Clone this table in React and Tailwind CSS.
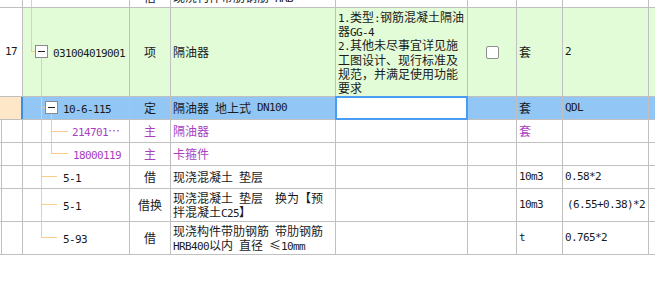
import React from 'react';

const LINE = 'border-[#c0c0c0]';
const CJK = "font-['Noto_Sans_CJK_SC',sans-serif]";

// SimSun-style mix: latin runs are half-width mono, CJK full-width
function Txt({ s }) {
  return s.split(/([\x20-\x7e]+)/).map((p, i) =>
    /^[\x20-\x7e]+$/.test(p) ? (
      <span
        key={i}
        className="font-['DejaVu_Sans_Mono',monospace] text-[11px] leading-[10px] tracking-[-0.62px]"
      >
        {p}
      </span>
    ) : (
      <React.Fragment key={i}>{p}</React.Fragment>
    )
  );
}

const V = ({ left, top = 0, h }) => (
  <span
    className="absolute w-px bg-[#fbcb8c]"
    style={{ left, top, height: h ?? `calc(100% - ${top}px)` }}
  />
);
const H = ({ left, top, w }) => (
  <span className="absolute h-px bg-[#fbcb8c]" style={{ left, top, width: w }} />
);
const Box = ({ left, top }) => (
  <span
    className="absolute w-[13px] h-[13px] border border-[#8a8a8a] bg-white"
    style={{ left, top }}
  >
    <span className="absolute left-[2px] top-[5px] w-[7px] h-px bg-[#222]" />
  </span>
);

const W = ['w-[23px]', 'w-[107px]', 'w-[41px]', 'w-[165px]', 'w-[132px]', 'w-[49px]', 'w-[46px]', 'w-[86px]'];

function Cell({ i, className = '', children }) {
  return <div className={`${W[i]} shrink-0 border-r ${LINE} ${className}`}>{children}</div>;
}

function Row({ h, className = '', children }) {
  return <div className={`flex ${h} border-b ${LINE} ${className}`}>{children}</div>;
}

const leftEdge = 'shadow-[inset_1px_0_0_white,inset_2px_0_0_#c0c0c0]';

function SubRow({ h, tree, code, type, name, unit, qty, qtyPl = 'pl-[2px]', purple, nameLines }) {
  const color = purple ? 'text-[#a93fbf]' : 'text-[#1a1a1a]';
  return (
    <Row h={h}>
      <Cell i={0} className={leftEdge} />
      <Cell i={1} className={`relative flex items-center ${color}`}>
        {tree.lines}
        <span className={`${tree.pl} whitespace-pre`}>
          <Txt s={code} />
        </span>
      </Cell>
      <Cell i={2} className={`flex items-center justify-center ${color}`}>{type}</Cell>
      <Cell i={3} className={`flex flex-col justify-center pl-[2px] whitespace-pre ${color}`}>
        {(nameLines || [name]).map((l) => (
          <div key={l}>
            <Txt s={l} />
          </div>
        ))}
      </Cell>
      <Cell i={4} />
      <Cell i={5} />
      <Cell i={6} className={`flex items-center pl-[2px] ${color}`}>
        <Txt s={unit} />
      </Cell>
      <Cell i={7} className={`flex items-center ${qtyPl} whitespace-pre`}>
        <Txt s={qty} />
      </Cell>
      <div className="flex-1" />
    </Row>
  );
}

export default function App() {
  return (
    <div className={`w-[655px] h-[284px] bg-white overflow-hidden text-[12px] leading-[14px] text-[#1a1a1a] ${CJK}`}>
      {/* tail of previous record */}
      <Row h="h-[8px]">
        <Cell i={0} />
        <Cell i={1} className="relative">
          <V left={8} />
        </Cell>
        <Cell i={2} className="overflow-hidden flex justify-center">
          <div className="-mt-[10px]">借</div>
        </Cell>
        <Cell i={3} className="overflow-hidden pl-[2px] whitespace-pre">
          <div className="-mt-[10px]">
            <Txt s="现浇构件带肋钢筋 HRB" />
          </div>
        </Cell>
        <Cell i={4} />
        <Cell i={5} />
        <Cell i={6} />
        <Cell i={7} />
        <div className="flex-1" />
      </Row>

      {/* bill item 17 */}
      <Row h="h-[89px]">
        <Cell i={0} className="flex items-center justify-center bg-white">
          <Txt s="17" />
        </Cell>
        <Cell i={1} className="relative flex items-center bg-[#e3fcd8]">
          <V left={8} h={44} />
          <H left={8} top={43} w={4} />
          <Box left={12} top={37} />
          <V left={18} top={50} />
          <span className="pl-[30px]">
            <Txt s="031004019001" />
          </span>
        </Cell>
        <Cell i={2} className="flex items-center justify-center bg-[#e3fcd8]">项</Cell>
        <Cell i={3} className="flex items-center pl-[2px] bg-[#e3fcd8]">隔油器</Cell>
        <Cell i={4} className="pl-[2px] pt-[2px] leading-[14.2px] whitespace-pre bg-[#e3fcd8]">
          {['1.类型:钢筋混凝土隔油', '器GG-4', '2.其他未尽事宜详见施', '工图设计、现行标准及', '规范，并满足使用功能', '要求'].map(
            (l) => (
              <div key={l} className="h-[14.2px]">
                <Txt s={l} />
              </div>
            )
          )}
        </Cell>
        <Cell i={5} className="flex items-center justify-center bg-[#e3fcd8]">
          <span className="w-[13px] h-[13px] rounded-[2px] border border-[#8f8f8f] bg-white" />
        </Cell>
        <Cell i={6} className="flex items-center pl-[2px] bg-[#e3fcd8]">套</Cell>
        <Cell i={7} className="flex items-center pl-[2px] bg-[#e3fcd8]">
          <Txt s="2" />
        </Cell>
        <div className="flex-1 bg-[#e3fcd8]" />
      </Row>

      {/* selected quota row */}
      <Row h="h-[23px]">
        <div className="w-[23px] shrink-0 bg-[#fee6c9] border-r-2 border-[#3a8ee8]" />
        <Cell i={1} className="relative flex items-center bg-[#92c6f5]">
          <V left={18} />
          <H left={18} top={10} w={4} />
          <Box left={22} top={4} />
          <V left={28} top={17} />
          <span className="pl-[40px]">
            <Txt s="10-6-115" />
          </span>
        </Cell>
        <Cell i={2} className="flex items-center justify-center bg-[#92c6f5]">定</Cell>
        <Cell i={3} className="flex items-center pl-[2px] whitespace-pre bg-[#92c6f5]">
          <Txt s="隔油器 地上式 DN100" />
        </Cell>
        <Cell i={4} className="relative bg-[#92c6f5]">
          <div className="absolute -left-px -top-px w-[133px] h-[24px] bg-white border-2 border-[#4a9df2]" />
        </Cell>
        <Cell i={5} className="bg-[#92c6f5]" />
        <Cell i={6} className="flex items-center pl-[2px] bg-[#92c6f5]">套</Cell>
        <Cell i={7} className="flex items-center pl-[2px] bg-[#92c6f5]">
          <Txt s="QDL" />
        </Cell>
        <div className="flex-1 bg-[#92c6f5]" />
      </Row>

      <SubRow
        h="h-[23px]"
        purple
        tree={{
          pl: 'pl-[49px]',
          lines: (
            <>
              <V left={18} />
              <V left={28} />
              <H left={28} top={11} w={17} />
            </>
          ),
        }}
        code="214701…"
        type="主"
        name="隔油器"
        unit="套"
        qty=""
      />
      <SubRow
        h="h-[23px]"
        purple
        tree={{
          pl: 'pl-[50px]',
          lines: (
            <>
              <V left={18} />
              <V left={28} h={11} />
              <H left={28} top={10} w={17} />
            </>
          ),
        }}
        code="18000119"
        type="主"
        name="卡箍件"
        unit=""
        qty=""
      />
      <SubRow
        h="h-[23px]"
        tree={{
          pl: 'pl-[40px]',
          lines: (
            <>
              <V left={18} />
              <H left={18} top={10} w={16} />
            </>
          ),
        }}
        code="5-1"
        type="借"
        name="现浇混凝土 垫层"
        unit="10m3"
        qty="0.58*2"
      />
      <SubRow
        h="h-[33px]"
        tree={{
          pl: 'pl-[40px]',
          lines: (
            <>
              <V left={18} />
              <H left={18} top={15} w={16} />
            </>
          ),
        }}
        code="5-1"
        type="借换"
        nameLines={['现浇混凝土 垫层  换为【预', '拌混凝土C25】']}
        unit="10m3"
        qty="(6.55+0.38)*2"
        qtyPl="pl-[4px]"
      />
      <SubRow
        h="h-[33px]"
        tree={{
          pl: 'pl-[40px]',
          lines: (
            <>
              <V left={18} h={16} />
              <H left={18} top={15} w={16} />
            </>
          ),
        }}
        code="5-93"
        type="借"
        nameLines={['现浇构件带肋钢筋 带肋钢筋', 'HRB400以内 直径 ≤10mm']}
        unit="t"
        qty="0.765*2"
      />
    </div>
  );
}
